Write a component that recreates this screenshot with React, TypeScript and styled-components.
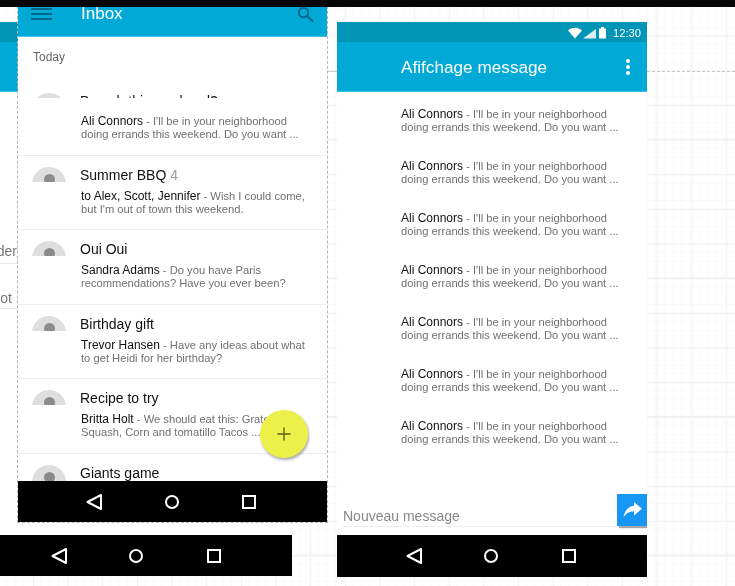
import * as React from 'react';
import styled, { createGlobalStyle } from 'styled-components';

const GlobalStyle = createGlobalStyle`
  html, body {
    margin: 0;
    background: #fff;
    font-family: "Liberation Sans", Arial, sans-serif;
  }
`;

const threads = [
  { title: 'Brunch this weekend?', sender: 'Ali Connors', text: " - I'll be in your neighborhood doing errands this weekend. Do you want ...", clip: 5, height: 63 },
  { title: 'Summer BBQ', count: 4, sender: 'to Alex, Scott, Jennifer', text: " - Wish I could come, but I'm out of town this weekend." },
  { title: 'Oui Oui', sender: 'Sandra Adams', text: ' - Do you have Paris recommendations? Have you ever been?' },
  { title: 'Birthday gift', sender: 'Trevor Hansen', text: ' - Have any ideas about what to get Heidi for her birthday?' },
  { title: 'Recipe to try', sender: 'Britta Holt', text: ' - We should eat this: Grated Squash, Corn and tomatillo Tacos ...' },
  { title: 'Giants game', sender: 'David Park', text: ' - Any interest in seeing the game?', full: true },
];

const messages = [0, 1, 2, 3, 4, 5, 6];

export default function App() {
  return (
    <Canvas>
      <GlobalStyle />
      <TopEdge />
      <GuideLine $left={327} $width={10} />
      <GuideLine $left={647} $width={88} />

      <Phone $left={-18} $top={22} $height={554}>
        <StatusBar />
        <AppBar />
        <BackBody>
          <BackLabel $top={151} $right={0}>Gender</BackLabel>
          <BackRule $gap={4} />
          <BackLabel $top={26} $right={5}>Slot</BackLabel>
          <BackRule $gap={2} />
        </BackBody>
        <NavBar />
      </Phone>

      <InboxPhone>
        <InboxBar>
          <Hamburger><i /><i /><i /></Hamburger>
          <InboxTitle>Inbox</InboxTitle>
          <SearchGlyph width="16" height="16" viewBox="0 0 16 16">
            <circle cx="5.500" cy="5.500" r="4.700" fill="none" stroke="#04688a" strokeWidth="2" />
            <path d="M9 9l6 5.500" fill="none" stroke="#04688a" strokeWidth="2.200" />
          </SearchGlyph>
        </InboxBar>
        <InboxBody>
          <SectionLabel>Today</SectionLabel>
          {threads.map(t => (
            <Thread key={t.title} $height={t.height}>
              <Avatar $clip={t.clip} $full={t.full}><span /></Avatar>
              <ThreadBody>
                <ThreadTitle $clip={t.clip}>
                  {t.title}{t.count ? <Count> {t.count}</Count> : null}
                </ThreadTitle>
                <Snippet $offset={t.clip ? 17 : 6}><b>{t.sender}</b>{t.text}</Snippet>
              </ThreadBody>
            </Thread>
          ))}
        </InboxBody>
        <NavBar />
        <Fab>
          <svg width="16" height="16" viewBox="0 0 16 16">
            <path d="M8 1.500v13M1.500 8h13" stroke="#5f6018" strokeWidth="1.400" />
          </svg>
        </Fab>
      </InboxPhone>

      <Phone $left={337} $top={22} $height={555}>
        <StatusBar>
          <svg width="39" height="12" viewBox="0 0 39 12">
            <path d="M0 3.500C4-.2 10-.2 14 3.500L7 11.500z" fill="#fff" />
            <path d="M15 11.500 28 2v9.500z" fill="#fff" opacity=".85" />
            <path d="M31 1.500h2V0h3v1.500h2v10h-7z" fill="#fff" />
          </svg>
          <Clock>12:30</Clock>
        </StatusBar>
        <AppBar>
          <AppTitle>Afifchage message</AppTitle>
          <Dots><i /><i /><i /></Dots>
        </AppBar>
        <MessageList>
          {messages.map(m => (
            <Message key={m}>
              <b>Ali Connors</b> - I'll be in your neighborhood doing errands this weekend. Do you want ...
            </Message>
          ))}
        </MessageList>
        <Composer>
          <ComposerInput>Nouveau message</ComposerInput>
          <SendButton>
            <svg width="19" height="16" viewBox="0 0 19 16">
              <path d="M11 0l8 6.800-8 6.800V9.500C6.500 9.300 3 11 .5 15.500 1.200 9.500 4.800 4.500 11 3.800z" fill="#fff" />
            </svg>
          </SendButton>
        </Composer>
        <NavBar $height={42} />
      </Phone>
    </Canvas>
  );
}

function NavBar({ $height = 41 }: { $height?: number }) {
  return (
    <NavStrip $height={$height}>
      <svg width="16" height="16" viewBox="0 0 16 16">
        <path d="M15 1v14L1.500 8z" fill="none" stroke="#fff" strokeWidth="2" strokeLinejoin="round" />
      </svg>
      <svg width="16" height="16" viewBox="0 0 16 16">
        <circle cx="8" cy="8" r="6" fill="none" stroke="#fff" strokeWidth="2" />
      </svg>
      <svg width="16" height="16" viewBox="0 0 16 16">
        <rect x="2" y="2" width="12" height="12" fill="none" stroke="#fff" strokeWidth="2" />
      </svg>
    </NavStrip>
  );
}

// Editor canvas: the phones are windows placed freely on the grid
const Canvas = styled.div`
  position: relative;
  width: 735px;
  height: 586px;
  overflow: hidden;
  filter: blur(0.3px);
  background-color: #fff;
  background-image:
    linear-gradient(#f7eeee 1px, transparent 1px),
    linear-gradient(#f1f1f1 1px, transparent 1px),
    linear-gradient(90deg, #f1f1f1 1px, transparent 1px),
    linear-gradient(#fafafa 1px, transparent 1px),
    linear-gradient(90deg, #fafafa 1px, transparent 1px);
  background-size: 138.67px 138.67px, 34.67px 34.67px, 34.67px 34.67px, 8.67px 8.67px, 8.67px 8.67px;
  background-position: 0 0, 0 1px, 33px 0, 0 1px, 6px 0;
`;

const TopEdge = styled.div`
  position: absolute;
  z-index: 5;
  left: 0;
  right: 0;
  top: 0;
  height: 7px;
  background: #050505;
`;

const GuideLine = styled.div<{ $left: number; $width: number }>`
  position: absolute;
  top: 71px;
  left: ${p => p.$left}px;
  width: ${p => p.$width}px;
  border-top: 1px dashed #c8c8c8;
`;

const Phone = styled.div<{ $left: number; $top: number; $height: number }>`
  position: absolute;
  left: ${p => p.$left}px;
  top: ${p => p.$top}px;
  width: 310px;
  height: ${p => p.$height}px;
  display: flex;
  flex-direction: column;
  background: #fff;
  overflow: hidden;
`;

const InboxPhone = styled.div`
  position: absolute;
  z-index: 2;
  left: 18px;
  top: -13px;
  width: 309px;
  height: 535px;
  display: flex;
  flex-direction: column;
  background: #fff;
  outline: 1px dashed #b5b5b5;
`;

const StatusBar = styled.div`
  height: 20px;
  flex: none;
  display: flex;
  align-items: center;
  justify-content: flex-end;
  gap: 6px;
  padding: 1px 6px 0 0;
  box-sizing: border-box;
  background: #0094b6;
`;

const Clock = styled.span`
  font-size: 11.200px;
  color: #fff;
`;

const AppBar = styled.div`
  height: 50px;
  flex: none;
  display: flex;
  align-items: center;
  justify-content: space-between;
  padding: 1px 17px 0 64px;
  background: #00a9d6;
  border-bottom: 1px solid #35c0e4;
  box-sizing: border-box;
`;

const AppTitle = styled.div`
  font-size: 17.200px;
  color: #fff;
`;

const Dots = styled.div`
  display: flex;
  flex-direction: column;
  gap: 2px;

  i {
    width: 4px;
    height: 4px;
    border-radius: 50%;
    background: #fff;
  }
`;

const BackBody = styled.div`
  flex: 1;
  min-height: 0;
`;

const BackLabel = styled.div<{ $top: number; $right: number }>`
  width: 35px;
  margin-top: ${p => p.$top}px;
  padding-right: ${p => p.$right}px;
  box-sizing: border-box;
  display: flex;
  justify-content: flex-end;
  white-space: nowrap;
  font-size: 14px;
  line-height: 16px;
  color: #777;
`;

const BackRule = styled.div<{ $gap: number }>`
  width: 35px;
  margin-top: ${p => p.$gap}px;
  border-top: 1px solid #e6e6e6;
`;

const InboxBar = styled.div`
  height: 50px;
  flex: none;
  display: flex;
  align-items: center;
  padding: 5px 13px 0 13px;
  box-sizing: border-box;
  background: #00a9d6;
  border-bottom: 1px solid #45c6e8;
`;

const Hamburger = styled.div`
  width: 21px;
  display: flex;
  flex-direction: column;
  gap: 3px;
  margin-right: 29px;

  i {
    height: 2px;
    background: #04688a;
  }
`;

const InboxTitle = styled.div`
  flex: 1;
  font-size: 17px;
  color: #fff;
`;

const SearchGlyph = styled.svg`
  margin-top: 2px;
`;

const InboxBody = styled.div`
  flex: 1;
  min-height: 0;
  overflow: hidden;
`;

const SectionLabel = styled.div`
  height: 56px;
  padding: 13px 0 0 15px;
  box-sizing: border-box;
  font-size: 12px;
  line-height: 14px;
  color: #666;
`;

const Thread = styled.div<{ $height?: number }>`
  height: ${p => p.$height ?? 74.4}px;
  box-sizing: border-box;
  display: flex;
  padding-left: 14px;
  border-bottom: 1px solid #ececec;
  overflow: hidden;

  &:last-child {
    border-bottom: 0;
  }
`;

const Avatar = styled.div<{ $clip?: number; $full?: boolean }>`
  position: relative;
  flex: none;
  width: 34px;
  height: ${p => (p.$clip ? p.$clip : p.$full ? 34 : 15)}px;
  margin: ${p => (p.$clip ? 0 : 11)}px 14px 0 0;
  overflow: hidden;

  &::before {
    content: '';
    display: block;
    width: 34px;
    height: 34px;
    border-radius: 50%;
    background: #dedede;
  }

  span {
    position: absolute;
    left: 11.500px;
    top: 7px;
    width: 11px;
    height: 11px;
    border-radius: 50%;
    background: #8b8b8b;
  }
`;

const ThreadBody = styled.div`
  min-width: 0;
  flex: 1;
  padding-right: 16px;
`;

const ThreadTitle = styled.div<{ $clip?: number }>`
  margin-top: ${p => (p.$clip ? 0 : 11)}px;
  height: ${p => (p.$clip ? `${p.$clip}px` : 'auto')};
  overflow: hidden;
  font-size: 14px;
  line-height: 17px;
  color: #111;
`;

const Count = styled.span`
  color: #999;
`;

const Snippet = styled.div<{ $offset: number }>`
  margin: ${p => p.$offset}px 0 0 1px;
  font-size: 11.200px;
  line-height: 13px;
  color: #707070;

  b {
    font-weight: 400;
    font-size: 12px;
    color: #111;
  }
`;

const Fab = styled.div`
  position: absolute;
  right: 19px;
  top: 423px;
  width: 48px;
  height: 48px;
  display: flex;
  align-items: center;
  justify-content: center;
  border-radius: 50%;
  background: #eef04a;
  box-shadow: 1px 2px 3px rgba(0, 0, 0, 0.35);
`;

const NavStrip = styled.div<{ $height: number }>`
  height: ${p => p.$height}px;
  flex: none;
  display: flex;
  align-items: center;
  justify-content: center;
  gap: 61.500px;
  padding-right: 2px;
  box-sizing: border-box;
  background: #000;
`;

const MessageList = styled.div`
  flex: 1;
  min-height: 0;
  padding: 16px 25px 0 64px;
  display: flex;
  flex-direction: column;
  gap: 13px;
`;

const Message = styled.div`
  font-size: 11.200px;
  line-height: 13px;
  height: 39px;
  color: #707070;

  b {
    font-weight: 400;
    font-size: 12px;
    color: #111;
  }
`;

const Composer = styled.div`
  flex: none;
  height: 41px;
  display: flex;
  align-items: flex-start;
  padding-left: 5px;
  gap: 2px;
`;

const ComposerInput = styled.div`
  flex: 1;
  height: 33px;
  padding: 14px 0 0 1px;
  box-sizing: border-box;
  font-size: 14px;
  line-height: 16px;
  color: #888;
  border-bottom: 1px solid #eee;
`;

const SendButton = styled.div`
  width: 30px;
  height: 32px;
  display: flex;
  align-items: center;
  justify-content: center;
  background: #1796f3;
  box-shadow: 2px 2px 1px rgba(0, 0, 0, 0.35);
`;
